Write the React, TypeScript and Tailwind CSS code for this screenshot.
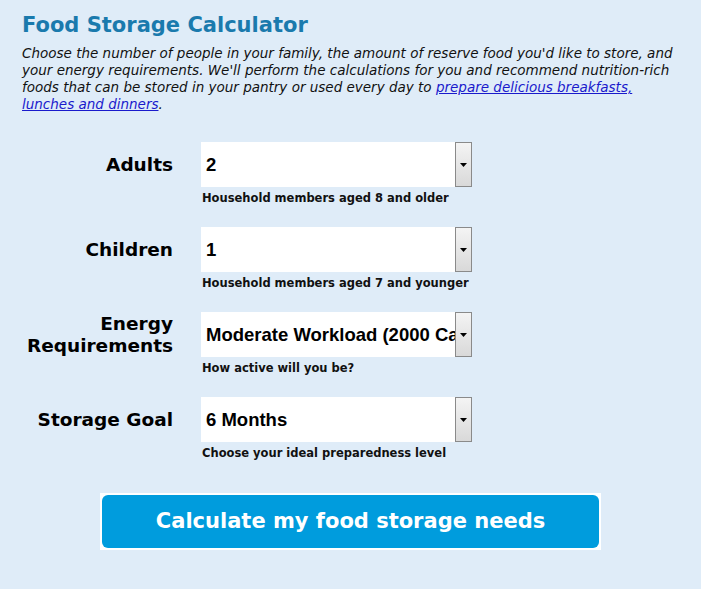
import React from 'react'

const fields = [
  { label: ['Adults'], value: '2', hint: 'Household members aged 8 and older' },
  { label: ['Children'], value: '1', hint: 'Household members aged 7 and younger' },
  { label: ['Energy', 'Requirements'], value: 'Moderate Workload (2000 Calories)', hint: 'How active will you be?' },
  { label: ['Storage Goal'], value: '6 Months', hint: 'Choose your ideal preparedness level' },
]

function FakeSelect({ value }: { value: string }) {
  return (
    <div className="flex h-[45px] w-[271px] bg-white">
      <div className="flex min-w-0 flex-1 items-center overflow-hidden whitespace-nowrap pl-[5px] font-['Liberation_Sans',Arial,sans-serif] text-[18.5px] font-bold text-black">
        {value}
      </div>
      <div className="flex w-[17px] items-center justify-center border border-[#8a8a8a] bg-gradient-to-b from-[#f4f4f4] to-[#d9d9d9]">
        <svg width="7" height="4" viewBox="0 0 7 4">
          <path d="M0 0h7L3.5 4z" fill="#000" />
        </svg>
      </div>
    </div>
  )
}

export default function App() {
  return (
    <div className="min-h-screen bg-[#dfecf8] pl-[22px] pt-[10px] font-['DejaVu_Sans',Verdana,sans-serif]">
      <h1 className="text-[21px] font-bold leading-[30px] text-[#1a7aad]">Food Storage Calculator</h1>
      <p className="mt-[5px] text-[13.5px] italic leading-[17px] text-[#111] whitespace-nowrap">
        Choose the number of people in your family, the amount of reserve food you'd like to store, and
        <br />
        your energy requirements. We'll perform the calculations for you and recommend nutrition-rich
        <br />
        foods that can be stored in your pantry or used every day to{' '}
        <a href="#" className="text-[#1a1acc] underline">
          prepare delicious breakfasts,
          <br />
          lunches and dinners
        </a>
        .
      </p>

      <div className="-ml-[22px] mt-[29px] flex flex-col gap-[21px]">
        {fields.map((f) => (
          <div key={f.hint} className="grid grid-cols-[173px_271px] gap-x-[28px]">
            <div className="flex items-center justify-end text-right text-[18.5px] font-bold leading-[22px] text-black">
              <div>
                {f.label.map((l) => (
                  <div key={l}>{l}</div>
                ))}
              </div>
            </div>
            <FakeSelect value={f.value} />
            <div />
            <div className="pl-[1px] pt-[4px] text-[11.5px] font-bold leading-[15px] text-[#111]">{f.hint}</div>
          </div>
        ))}
      </div>

      <div className="-ml-[22px] mt-[32px] pl-[100px]">
        <div className="w-[501px] bg-white p-[2px]">
          <button className="flex h-[53px] w-full items-center justify-center rounded-[6px] bg-[#009cdd] text-[21px] font-bold text-white">
            Calculate my food storage needs
          </button>
        </div>
      </div>
    </div>
  )
}
